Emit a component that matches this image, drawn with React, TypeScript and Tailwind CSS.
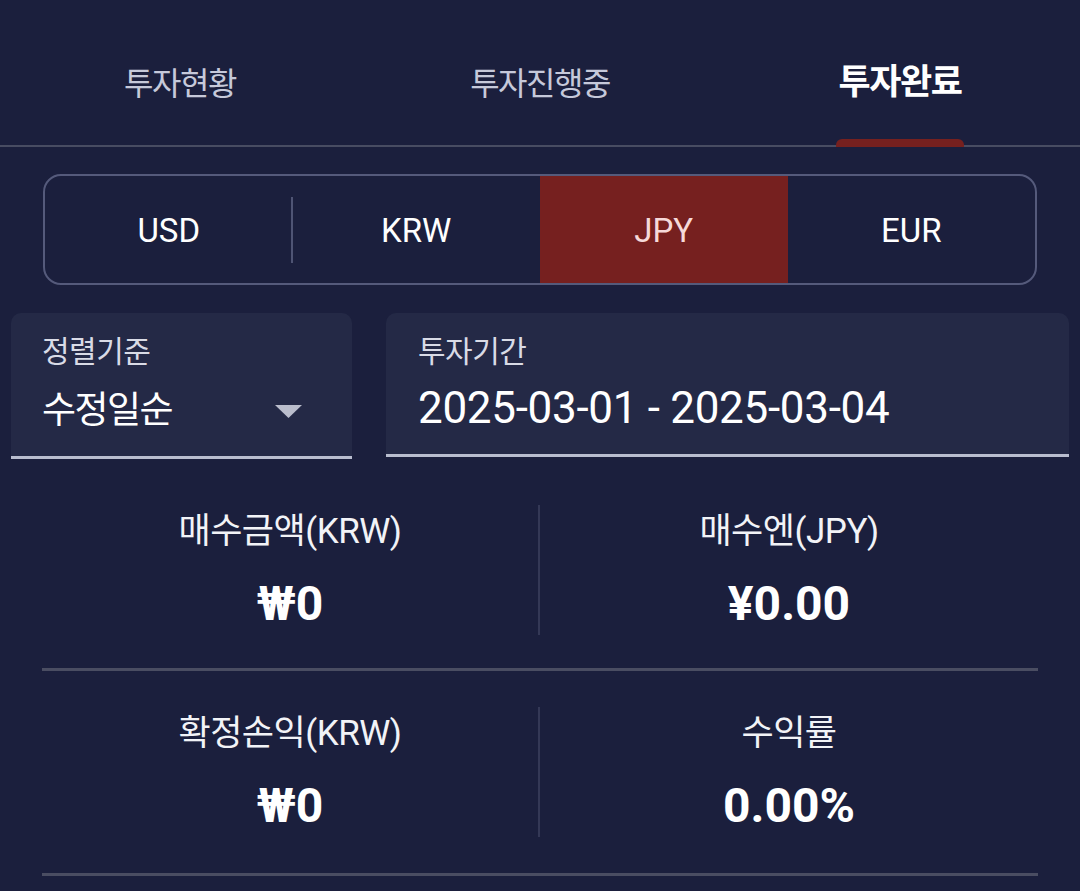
import React from "react";

const font = { fontFamily: 'Roboto, "Noto Sans CJK KR", sans-serif' };

function Tab({ label, active }: { label: string; active?: boolean }) {
  return (
    <div className="relative flex-1 flex items-center justify-center pt-[22px]">
      <span
        className={
          active
            ? "text-[35px] font-bold text-white tracking-[-1.5px]"
            : "text-[32px] text-[#c6c9da] tracking-[-1.5px]"
        }
      >
        {label}
      </span>
      {active && (
        <div className="absolute bottom-[-2px] left-1/2 -translate-x-1/2 w-[128px] h-[8px] bg-[#76201f] rounded-t-[6px]" />
      )}
    </div>
  );
}

function StatRow({
  a,
  av,
  b,
  bv,
  pt,
  pb,
}: {
  a: string;
  av: string;
  b: string;
  bv: string;
  pt: string;
  pb: string;
}) {
  return (
    <div className={`mx-[42px] border-b-[3px] border-[#4a4d62] ${pt} ${pb}`}>
      <div className="grid grid-cols-2">
        <div className="h-[130px] flex flex-col items-center border-r-2 border-[#343856]">
          <div className="mt-[7px] h-[40px] leading-[40px] text-[35px] text-[#f2f3f7] tracking-[-0.5px]">
            {a}
          </div>
          <div className="mt-[27px] h-[50px] leading-[50px] text-[48px] font-bold text-white">
            {av}
          </div>
        </div>
        <div className="h-[130px] flex flex-col items-center">
          <div className="mt-[7px] h-[40px] leading-[40px] text-[35px] text-[#f2f3f7] tracking-[-0.5px]">
            {b}
          </div>
          <div className="mt-[27px] h-[50px] leading-[50px] text-[48px] font-bold text-white">
            {bv}
          </div>
        </div>
      </div>
    </div>
  );
}

export default function App() {
  const currencies = ["USD", "KRW", "JPY", "EUR"];
  return (
    <div
      className="w-[1080px] h-[891px] bg-[#1b1f3d] overflow-hidden"
      style={font}
    >
      {/* Tabs */}
      <div className="flex h-[147px] border-b-2 border-[#484c62]">
        <Tab label="투자현황" />
        <Tab label="투자진행중" />
        <Tab label="투자완료" active />
      </div>

      {/* Currency segment */}
      <div className="mx-[43px] mt-[27px] h-[111px] border-2 border-[#555a7b] rounded-[18px] overflow-hidden grid grid-cols-4">
        {currencies.map((c, i) => (
          <div
            key={c}
            className={`relative flex items-center justify-center text-[33px] pt-[2px] ${
              c === "JPY" ? "bg-[#76201f] text-[#f6d9d9]" : "text-white"
            }`}
          >
            {c}
            {i === 0 && (
              <div className="absolute right-0 top-[21px] h-[66px] w-[2px] bg-[#4f5474]" />
            )}
          </div>
        ))}
      </div>

      {/* Fields */}
      <div className="flex mx-[11px] mt-[28px] gap-[34px]">
        <div className="w-[341px] h-[146px] bg-[#242946] rounded-t-[10px] border-b-[3px] border-[#b9bdcf] px-[31px] relative">
          <div className="mt-[21px] h-[36px] leading-[36px] text-[30px] text-[#d9dbe6] tracking-[-0.5px]">
            정렬기준
          </div>
          <div className="mt-[17px] h-[48px] leading-[48px] text-[37px] text-white tracking-[-1.5px] flex items-center justify-between">
            <span>수정일순</span>
            <svg width="27" height="14" viewBox="0 0 27 14" className="mr-[19px] mt-[2px]">
              <polygon points="0,0 27,0 13.5,13" fill="#babdcc" />
            </svg>
          </div>
        </div>
        <div className="flex-1 h-[144px] bg-[#242946] rounded-t-[10px] border-b-[3px] border-[#b9bdcf] px-[32px]">
          <div className="mt-[21px] h-[36px] leading-[36px] text-[30px] text-[#d9dbe6] tracking-[-0.5px]">
            투자기간
          </div>
          <div className="mt-[13px] h-[50px] leading-[50px] text-[44px] text-white tracking-[-0.3px]">
            2025-03-01 - 2025-03-04
          </div>
        </div>
      </div>

      {/* Stats */}
      <StatRow
        a="매수금액(KRW)"
        av="₩0"
        b="매수엔(JPY)"
        bv="¥0.00"
        pt="pt-[46px]"
        pb="pb-[33px]"
      />
      <StatRow
        a="확정손익(KRW)"
        av="₩0"
        b="수익률"
        bv="0.00%"
        pt="pt-[36px]"
        pb="pb-[36px]"
      />
    </div>
  );
}
